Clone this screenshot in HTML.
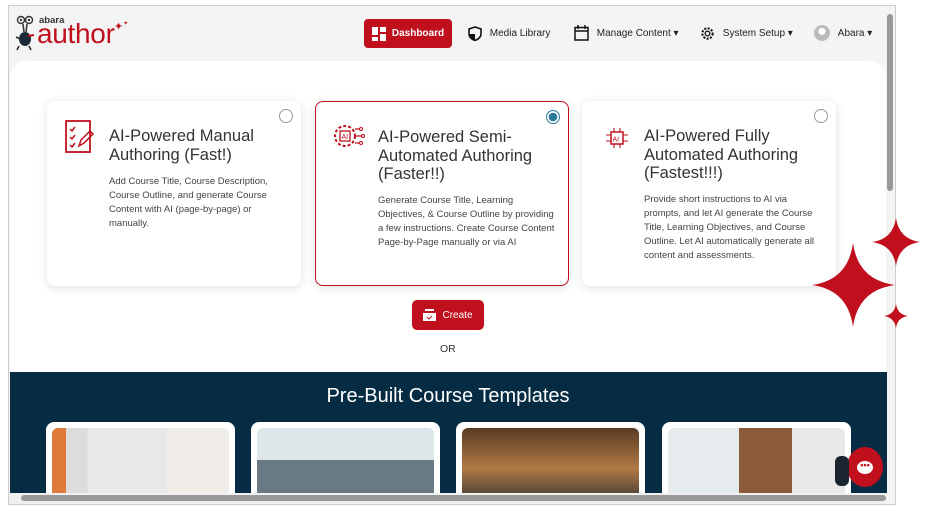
<!DOCTYPE html>
<html><head><meta charset="utf-8"><style>
*{box-sizing:border-box;margin:0;padding:0}
body{width:932px;height:513px;background:#fff;font-family:"Liberation Sans",sans-serif;position:relative;overflow:hidden}
.abs{position:absolute}
.win{left:8px;top:5px;width:888px;height:500px;border:1px solid #ccc;background:#f4f4f4;overflow:hidden}
.nav{font-size:10px;color:#222;display:flex;align-items:center;gap:5px}
.card{position:absolute;top:100px;width:254px;height:185px;background:#fff;border-radius:8px;box-shadow:0 2px 10px rgba(0,0,0,.12)}
.card h2{position:absolute;left:62px;top:26px;font-weight:normal;font-size:16.5px;line-height:18.5px;color:#333;width:185px}
.card p{position:absolute;left:62px;font-size:9.5px;line-height:14px;color:#444;width:180px}
.radio{position:absolute;right:8px;top:8px;width:14px;height:14px;border-radius:50%;border:1px solid #999;background:#fff}
.tpl{position:absolute;top:416px;width:189px;height:80px;background:#fff;border-radius:8px;padding:6px 6px 0}
.tpl div{width:100%;height:80px;border-radius:6px}
</style></head><body>
<div class="abs win">
  <!-- logo -->
  <svg class="abs" style="left:5px;top:9px" width="22" height="36" viewBox="0 0 22 36"><circle cx="7" cy="5" r="3.5" fill="none" stroke="#333" stroke-width="1.4"/><circle cx="15" cy="5" r="3.5" fill="none" stroke="#333" stroke-width="1.4"/><circle cx="7" cy="5" r="1.2" fill="#333"/><circle cx="15" cy="5" r="1.2" fill="#333"/><path d="M9 9l1 8M13 9l-1 8" stroke="#333" stroke-width="1.5"/><ellipse cx="11" cy="24" rx="6" ry="7" fill="#1a2a38"/><path d="M2 22l4 2M5 31l-2 4M15 31l2 4" stroke="#333" stroke-width="1.6"/><path d="M14 21l6-1" stroke="#c0101e" stroke-width="2"/></svg>
  <div class="abs" style="left:30px;top:9px;font-size:9.5px;color:#333;font-weight:bold">abara</div>
  <div class="abs" style="left:28px;top:12px;font-size:28px;color:#c0101e;letter-spacing:-0.3px">author</div>
  <div class="abs" style="left:105px;top:14px;color:#c0101e;font-size:11px">✦<span style="font-size:6px;vertical-align:top">✦</span></div>
  <!-- nav -->
  <div class="abs" style="left:355px;top:13px;width:88px;height:29px;background:#c0101e;border-radius:4px;color:#fff;font-size:10px;display:flex;align-items:center;justify-content:center;gap:6px;font-weight:bold">
    <svg width="14" height="14"><rect x="0" y="0" width="6" height="8" fill="#fff"/><rect x="8" y="0" width="6" height="5" fill="#fff"/><rect x="0" y="10" width="6" height="4" fill="#fff"/><rect x="8" y="7" width="6" height="7" fill="#fff"/></svg>Dashboard</div>
  <div class="abs nav" style="left:459px;top:20px"><svg width="14" height="15" viewBox="0 0 14 15"><path d="M7 1L1 3v5c0 3 3 5.5 6 6.5 3-1 6-3.5 6-6.5V3z" fill="none" stroke="#111" stroke-width="1.6"/><path d="M7 1v13.5C4 13.5 1 11 1 8h6z" fill="#111"/></svg>&nbsp;Media Library</div>
  <div class="abs nav" style="left:565px;top:19px"><svg width="15" height="16"><rect x="1" y="2.5" width="13" height="12.5" fill="none" stroke="#111" stroke-width="1.5"/><path d="M1 6h13M4 0v4M11 0v4" stroke="#111" stroke-width="1.5"/></svg>&nbsp;Manage Content ▾</div>
  <div class="abs nav" style="left:691px;top:20px"><svg width="15" height="15" viewBox="0 0 16 16"><circle cx="8" cy="8" r="5.5" fill="none" stroke="#111" stroke-width="2.2" stroke-dasharray="2.2 1.5"/><circle cx="8" cy="8" r="2.5" fill="none" stroke="#111" stroke-width="1.4"/></svg>&nbsp;System Setup ▾</div>
  <div class="abs nav" style="left:805px;top:19px"><div style="width:16px;height:16px;border-radius:50%;background:radial-gradient(circle at 50% 40%,#fff 0 3px,#bbb 4px)"></div>&nbsp;Abara ▾</div>
  <!-- scrollbar v -->
  <div class="abs" style="left:878px;top:8px;width:6px;height:177px;background:#999;border-radius:3px"></div>
  <!-- main panel -->
  <div class="abs" style="left:1px;top:55px;width:876px;height:440px;background:#fff;border-radius:16px 16px 0 0"></div>
  <div class="card" style="left:38px;top:95px">
    <svg class="abs" style="left:18px;top:19px" width="30" height="34" viewBox="0 0 30 34"><rect x="1" y="1" width="24" height="31" fill="none" stroke="#c0101e" stroke-width="1.8"/><path d="M5 9l2 2 3-4M5 17l2 2 3-4M5 25l2 2 3-4" stroke="#c0101e" stroke-width="1.5" fill="none"/><path d="M14 26l2-6 9-9 3 3-9 9z" stroke="#c0101e" stroke-width="1.5" fill="none"/></svg>
    <h2>AI-Powered Manual Authoring (Fast!)</h2>
    <p style="top:74px">Add Course Title, Course Description, Course Outline, and generate Course Content with AI (page-by-page) or manually.</p>
    <div class="radio"></div>
  </div>
  <div class="card" style="left:306px;top:95px;border:1.5px solid #c0101e">
    <svg class="abs" style="left:17px;top:19px" width="32" height="30" viewBox="0 0 32 30"><circle cx="12" cy="15" r="10" fill="none" stroke="#c0101e" stroke-width="2" stroke-dasharray="3 2"/><rect x="7" y="10" width="10" height="10" fill="none" stroke="#c0101e" stroke-width="1.3"/><text x="8.5" y="18" font-size="7" fill="#c0101e" font-family="Liberation Sans">AI</text><path d="M22 8h5M22 15h7M22 22h5" stroke="#c0101e" stroke-width="1.2"/><circle cx="28" cy="8" r="1.5" fill="none" stroke="#c0101e"/><circle cx="30" cy="15" r="1.5" fill="none" stroke="#c0101e"/><circle cx="28" cy="22" r="1.5" fill="none" stroke="#c0101e"/></svg>
    <h2>AI-Powered Semi-Automated Authoring (Faster!!)</h2>
    <p style="top:92px">Generate Course Title, Learning Objectives, &amp; Course Outline by providing a few instructions. Create Course Content Page-by-Page manually or via AI</p>
    <div class="radio" style="border:1.5px solid #2a7a9a;background:radial-gradient(circle,#2a7a9a 0 4px,#fff 4.5px)"></div>
  </div>
  <div class="card" style="left:573px;top:95px">
    <svg class="abs" style="left:20px;top:24px" width="30" height="28" viewBox="0 0 30 28"><rect x="9" y="7" width="12" height="12" fill="none" stroke="#c0101e" stroke-width="1.5"/><text x="10.5" y="16.5" font-size="7" fill="#c0101e" font-family="Liberation Sans">AI</text><path d="M12 7V3M18 7V3M12 19v4M18 19v4M9 10H4M9 16H4M21 10h5M21 16h5" stroke="#c0101e" stroke-width="1.1"/></svg>
    <h2>AI-Powered Fully Automated Authoring (Fastest!!!)</h2>
    <p style="top:92px">Provide short instructions to AI via prompts, and let AI generate the Course Title, Learning Objectives, and Course Outline. Let AI automatically generate all content and assessments.</p>
    <div class="radio"></div>
  </div>
  <div class="abs" style="left:403px;top:294px;width:72px;height:30px;background:#c0101e;border-radius:5px;color:#fff;font-size:10px;display:flex;align-items:center;justify-content:center;gap:6px"><svg width="13" height="12"><rect x="2" y="0" width="9" height="2" fill="#fff"/><rect x="0" y="4" width="13" height="8" fill="#fff"/><path d="M4 8l2 2 3-3" stroke="#c0101e" fill="none"/></svg>Create</div>
  <div class="abs" style="left:431px;top:337px;font-size:10.5px;color:#333">OR</div>
  <!-- templates section -->
  <div class="abs" style="left:1px;top:366px;width:877px;height:130px;background:#062c44"></div>
  <div class="abs" style="left:0;top:379px;width:878px;text-align:center;color:#fff;font-size:20px">Pre-Built Course Templates</div>
  <div class="tpl" style="left:37px"><div style="background:linear-gradient(90deg,#e07a3a 0 8%,#ddd 8% 20%,#e8e8e8 20% 65%,#f0ede8 65%);"></div></div>
  <div class="tpl" style="left:242px"><div style="background:linear-gradient(180deg,#dde6e8 0 40%,#6a7a84 40%),#aaa"></div></div>
  <div class="tpl" style="left:447px"><div style="background:linear-gradient(180deg,#5a3a22,#b07a44 50%,#2a2a30)"></div></div>
  <div class="tpl" style="left:653px"><div style="background:linear-gradient(90deg,#e6ecee 0 40%,#8a5a3a 40% 70%,#e8e8e6 70%)"></div></div>
  <!-- chat -->
  <div class="abs" style="left:838px;top:441px;width:36px;height:40px;border-radius:50%;background:#c0101e;display:flex;align-items:center;justify-content:center"><div style="width:16px;height:13px;border-radius:50%;background:#fff;color:#c0101e;font-size:9px;line-height:8px;text-align:center;font-weight:bold">•••</div></div>
  <div class="abs" style="left:826px;top:450px;width:14px;height:30px;background:#1a2530;border-radius:6px"></div>
  <!-- h scrollbar -->
  <div class="abs" style="left:0;top:487px;width:878px;height:13px;background:#f0f0f0"></div>
  <div class="abs" style="left:12px;top:489px;width:865px;height:6px;background:#999;border-radius:3px"></div>
</div>
<!-- stars -->
<svg class="abs" style="left:805px;top:212px" width="127" height="120" viewBox="805 212 127 120">
  <path d="M853 243Q858 280 895 285Q858 290 853 327Q848 290 812 285Q848 280 853 243z" fill="#c0101e"/>
  <path d="M896 218Q899 239 920 242Q899 245 896 266Q893 245 872 242Q893 239 896 218z" fill="#c0101e"/>
  <path d="M896 304Q897.5 314.5 908 316Q897.5 317.5 896 328Q894.5 317.5 884 316Q894.5 314.5 896 304z" fill="#c0101e"/>
</svg>
</body></html>
